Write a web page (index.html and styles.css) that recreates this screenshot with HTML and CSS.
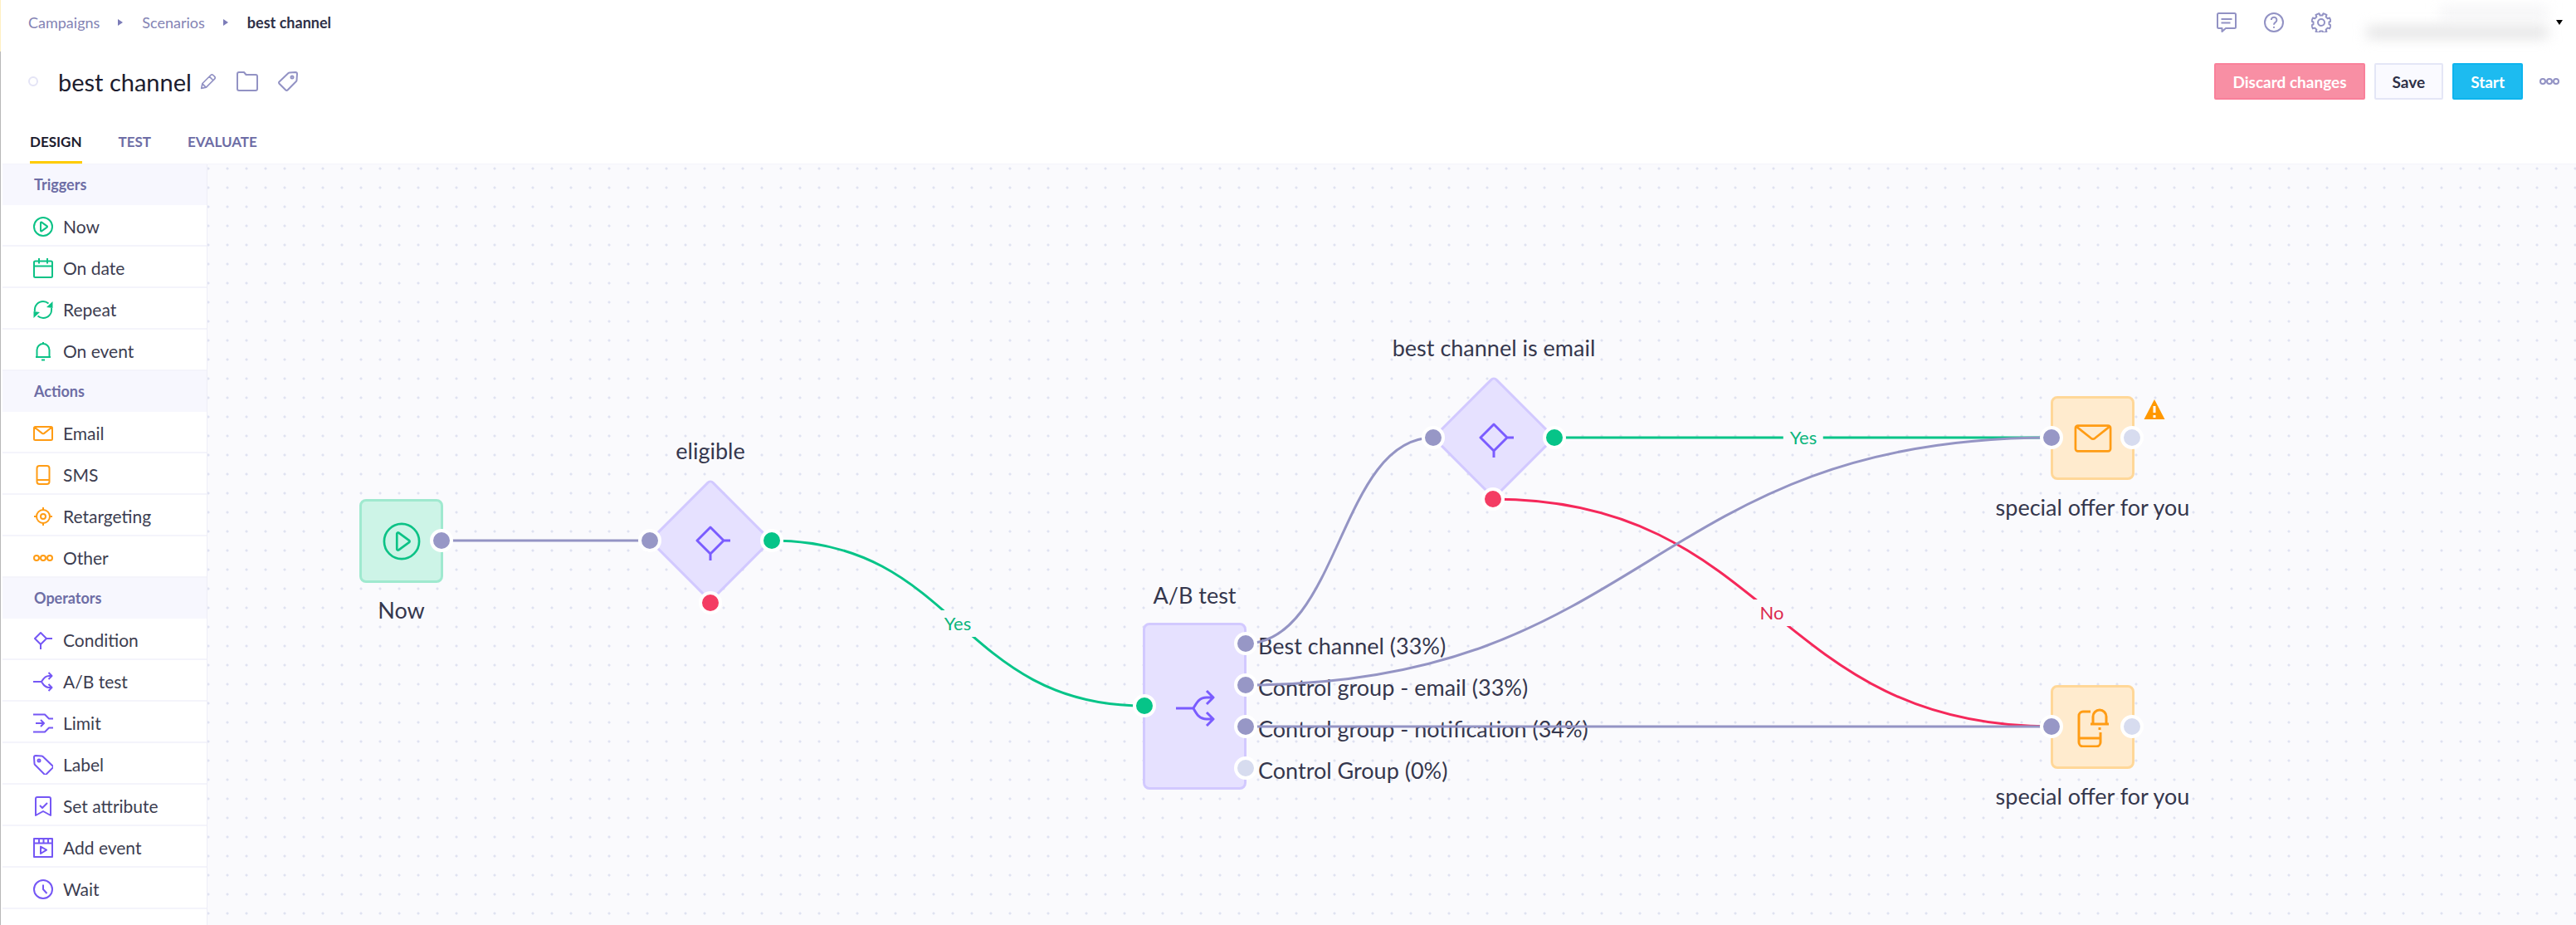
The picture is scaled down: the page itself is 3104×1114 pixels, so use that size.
FILE: index.html
```html
<!DOCTYPE html>
<html lang="en">

<head>
    <meta charset="UTF-8">
    <meta name="viewport" content="width=device-width, initial-scale=1.0">
    <title>best channel - Scenarios</title>
    <link rel="stylesheet" href="styles.css">
</head>

<body>
    <!-- icon set -->
    <svg class="sprite" aria-hidden="true">
        <symbol id="i-chat" viewBox="0 0 24 24">
            <path d="M2.5 1h19A1.5 1.5 0 0 1 23 2.5v15a1.5 1.5 0 0 1-1.5 1.500H11l-4.500 4v-4h-4A1.5 1.5 0 0 1 1 17.5v-15A1.5 1.5 0 0 1 2.5 1zM5.500 8h13M5.500 12.500h11" />
        </symbol>
        <symbol id="i-help" viewBox="0 0 24 24">
            <circle cx="12" cy="12" r="11" />
            <path d="M8.800 9a3.300 3.300 0 1 1 5 2.800c-1.200.8-1.800 1.400-1.800 3M12 17v1.800" />
        </symbol>
        <symbol id="i-gear" viewBox="0 0 24 24">
            <circle cx="12" cy="12" r="4" />
            <path d="M9.500 1.200l1 2.300h3l1-2.300 4 1.700-.9 2.400 2.100 2.100 2.400-.9 1.600 4-2.200 1v2.900l2.200 1.100-1.600 3.900-2.400-.8-2.100 2.100.9 2.300-4 1.700-1-2.200h-3l-1 2.200-4-1.700.9-2.300-2.100-2.100-2.400.8-1.500-3.900 2.100-1.100v-2.900l-2.100-1 1.500-4 2.400.9 2.100-2.100-.9-2.400z" />
        </symbol>
        <symbol id="i-pencil" viewBox="0 0 24 24">
            <path d="M2 22l1.500-7L15.500 3a2.500 2.500 0 0 1 3.500 0l2 2a2.500 2.500 0 0 1 0 3.500L9 20.500zM13.500 5l5.500 5.500M3.500 15.500l5 5" />
        </symbol>
        <symbol id="i-folder" viewBox="0 0 26 24">
            <path d="M1 3a2 2 0 0 1 2-2h6l2.500 3H23a2 2 0 0 1 2 2v15a2 2 0 0 1-2 2H3a2 2 0 0 1-2-2z" />
        </symbol>
        <symbol id="i-tag" viewBox="0 0 24 24">
            <path d="M14 1.500l7-.5a2 2 0 0 1 2 2l-.5 7.500a2 2 0 0 1-.6 1.500L11.500 22.500a1.500 1.500 0 0 1-2.200 0L1.500 14.700a1.500 1.500 0 0 1 0-2.200L12.500 2a2 2 0 0 1 1.500-.5z" />
            <circle cx="17" cy="7" r="1.500" />
        </symbol>
        <symbol id="i-dots" viewBox="0 0 24 24">
            <circle cx="4" cy="12" r="3" />
            <circle cx="12" cy="12" r="3" />
            <circle cx="20" cy="12" r="3" />
        </symbol>
        <symbol id="i-play" viewBox="0 0 24 24">
            <circle cx="12" cy="12" r="11" />
            <path d="M9 7.200v9.600c0 .6.600.9 1.100.6l6.600-4.800c.4-.3.400-.9 0-1.200l-6.600-4.800c-.5-.3-1.100 0-1.100.6z" />
        </symbol>
        <symbol id="i-calendar" viewBox="0 0 24 24">
            <path d="M2.500 3.500h19A1.500 1.500 0 0 1 23 5v16.500a1.500 1.500 0 0 1-1.500 1.500h-19A1.500 1.500 0 0 1 1 21.500V5a1.500 1.500 0 0 1 1.500-1.500zM1 9.500h22M7 0v6.500M17 0v6.500" />
        </symbol>
        <symbol id="i-repeat" viewBox="0 0 24 24">
            <path d="M2 14C1 7 6 2 12 2c2.500 0 4.500.8 6.500 2.500M22 10c1 7-4 12-10 12-2.500 0-4.500-.8-6.500-2.500" />
            <path class="solid" d="M16 9l7.500-7V10zM8 15l-7.500 7V14z" />
        </symbol>
        <symbol id="i-bell" viewBox="0 0 24 24">
            <path d="M3 19h18M4.500 19v-8.500a7.500 7.500 0 0 1 15 0V19M12 3V1M10 22.500h4" />
        </symbol>
        <symbol id="i-mail" viewBox="0 0 24 24">
            <path d="M2.500 4h19A1.500 1.500 0 0 1 23 5.500v13a1.500 1.500 0 0 1-1.500 1.500h-19A1.500 1.500 0 0 1 1 18.500v-13A1.500 1.500 0 0 1 2.500 4zM1.500 4.500l9.300 7.400a2 2 0 0 0 2.400 0l9.300-7.400" />
        </symbol>
        <symbol id="i-phone" viewBox="0 0 24 24">
            <rect x="4.500" y="1" width="15" height="22" rx="3" />
            <path d="M4.500 18h15" />
        </symbol>
        <symbol id="i-target" viewBox="0 0 24 24">
            <circle cx="12" cy="12" r="8" />
            <circle cx="12" cy="12" r="3" />
            <path d="M12 1v4M12 19v4M1 12h4M19 12h4" />
        </symbol>
        <symbol id="i-condition" viewBox="0 0 24 24">
            <path d="M9 3l7 7-7 7-7-7zM16 10h7M9 17v6" />
        </symbol>
        <symbol id="i-split" viewBox="0 0 24 24">
            <path d="M0 12h10M10 12c2-3 3.500-7 9-7h3M10 12c2 3 3.500 7 9 7h3M18.500 1l4 4-4 4M18.500 15l4 4-4 4" />
        </symbol>
        <symbol id="i-limit" viewBox="0 0 24 24">
            <path d="M0 1.500h14l5 5h5M0 22.500h14l5-5h5M3 12h9M9 8l4 4-4 4" />
        </symbol>
        <symbol id="i-label" viewBox="0 0 24 24">
            <path d="M10 1.500L3 1a2 2 0 0 0-2 2l.5 7.500a2 2 0 0 0 .6 1.500l11.400 11.500a1.500 1.500 0 0 0 2.200 0l7.800-7.800a1.500 1.500 0 0 0 0-2.200L11.500 2a2 2 0 0 0-1.500-.5z" />
            <circle cx="7" cy="7" r="1.500" />
        </symbol>
        <symbol id="i-bookmark" viewBox="0 0 24 24">
            <path d="M5 1h14a2 2 0 0 1 2 2v20l-9-5-9 5V3a2 2 0 0 1 2-2zM8 11l3 3 6-6" />
        </symbol>
        <symbol id="i-event" viewBox="0 0 24 24">
            <path d="M1 1h22v22H1zM1 6.500h22M7 1v5M12.500 1v5M18 1v5M9 10.500l7 4.200-7 4.300z" />
        </symbol>
        <symbol id="i-clock" viewBox="0 0 24 24">
            <circle cx="12" cy="12" r="11" />
            <path d="M12 6.500V12l4.500 5" />
        </symbol>
        <symbol id="i-branch" viewBox="0 0 48 48">
            <path d="M24 8l16 16-16 16L8 24zM40 24h11M24 40v11" />
        </symbol>
        <symbol id="i-fork" viewBox="0 0 48 48">
            <path d="M1 26h21M22 26c4-7 7-13 16-13h7M22 26c4 7 7 13 16 13h7M38 5l8 8-8 8M38 31l8 8-8 8" />
        </symbol>
        <symbol id="i-push" viewBox="0 0 40 48">
            <path d="M17 5H8a5 5 0 0 0-5 5v32a5 5 0 0 0 5 5h16a5 5 0 0 0 5-5V30M3 37h26M17 20h22M20 20v-9a8 8 0 0 1 16 0v9M28 24v3" />
        </symbol>
    </svg>

    <header class="header">
        <div class="topbar">
            <nav class="breadcrumbs" aria-label="Breadcrumb">
                <a href="#">Campaigns</a>
                <span class="arrow"></span>
                <a href="#">Scenarios</a>
                <span class="arrow"></span>
                <a href="#" class="current">best channel</a>
            </nav>
            <div class="tools">
                <button type="button" class="icon-button" aria-label="Messages"><svg class="icon"><use href="#i-chat" /></svg></button>
                <button type="button" class="icon-button" aria-label="Help"><svg class="icon"><use href="#i-help" /></svg></button>
                <button type="button" class="icon-button" aria-label="Settings"><svg class="icon"><use href="#i-gear" /></svg></button>
                <button type="button" class="account" aria-label="Account">
                    <span class="account-lines">
                        <span class="line short"></span>
                        <span class="line"></span>
                    </span>
                    <span class="caret"></span>
                </button>
            </div>
        </div>

        <div class="titlebar">
            <span class="status"></span>
            <h1>best channel</h1>
            <button type="button" class="icon-button edit" aria-label="Rename"><svg class="icon"><use href="#i-pencil" /></svg></button>
            <button type="button" class="icon-button folder" aria-label="Folder"><svg class="icon"><use href="#i-folder" /></svg></button>
            <button type="button" class="icon-button" aria-label="Tags"><svg class="icon"><use href="#i-tag" /></svg></button>
            <div class="actions">
                <button type="button" class="btn btn-discard">Discard changes</button>
                <button type="button" class="btn btn-save">Save</button>
                <button type="button" class="btn btn-start">Start</button>
                <button type="button" class="icon-button more" aria-label="More"><svg class="icon"><use href="#i-dots" /></svg></button>
            </div>
        </div>

        <nav class="tabs">
            <a href="#" class="tab active">DESIGN</a>
            <a href="#" class="tab">TEST</a>
            <a href="#" class="tab">EVALUATE</a>
        </nav>
    </header>

    <div class="editor">
        <aside class="sidebar">
            <h2>Triggers</h2>
            <div class="group triggers">
                <button type="button"><svg class="icon"><use href="#i-play" /></svg>Now</button>
                <button type="button"><svg class="icon"><use href="#i-calendar" /></svg>On date</button>
                <button type="button"><svg class="icon"><use href="#i-repeat" /></svg>Repeat</button>
                <button type="button"><svg class="icon"><use href="#i-bell" /></svg>On event</button>
            </div>
            <h2>Actions</h2>
            <div class="group sends">
                <button type="button"><svg class="icon"><use href="#i-mail" /></svg>Email</button>
                <button type="button"><svg class="icon"><use href="#i-phone" /></svg>SMS</button>
                <button type="button"><svg class="icon"><use href="#i-target" /></svg>Retargeting</button>
                <button type="button"><svg class="icon"><use href="#i-dots" /></svg>Other</button>
            </div>
            <h2>Operators</h2>
            <div class="group operators">
                <button type="button"><svg class="icon"><use href="#i-condition" /></svg>Condition</button>
                <button type="button"><svg class="icon"><use href="#i-split" /></svg>A/B test</button>
                <button type="button"><svg class="icon"><use href="#i-limit" /></svg>Limit</button>
                <button type="button"><svg class="icon"><use href="#i-label" /></svg>Label</button>
                <button type="button"><svg class="icon"><use href="#i-bookmark" /></svg>Set attribute</button>
                <button type="button"><svg class="icon"><use href="#i-event" /></svg>Add event</button>
                <button type="button"><svg class="icon"><use href="#i-clock" /></svg>Wait</button>
            </div>
        </aside>

        <main class="canvas">
            <div class="node node-trigger now">
                <svg class="glyph"><use href="#i-play" /></svg>
                <span class="node-label">Now</span>
            </div>
            <div class="node node-condition eligible">
                <svg class="glyph large"><use href="#i-branch" /></svg>
                <span class="node-label above">eligible</span>
            </div>
            <div class="node node-split ab-test">
                <svg class="glyph large"><use href="#i-fork" /></svg>
                <span class="node-label above">A/B test</span>
                <ul class="variants">
                    <li>Best channel (33%)</li>
                    <li>Control group - email (33%)</li>
                    <li>Control group - notification (34%)</li>
                    <li>Control Group (0%)</li>
                </ul>
            </div>
            <div class="node node-condition is-email">
                <svg class="glyph large"><use href="#i-branch" /></svg>
                <span class="node-label above">best channel is email</span>
            </div>
            <div class="node node-action email">
                <svg class="glyph"><use href="#i-mail" /></svg>
                <span class="node-label">special offer for you</span>
                <svg class="warning" viewBox="0 0 26 26">
                    <path d="M13 1L25.500 25H.5z" />
                    <path class="mark" d="M13 9v8M13 20v3" />
                </svg>
            </div>
            <div class="node node-action push">
                <svg class="glyph large"><use href="#i-push" /></svg>
                <span class="node-label">special offer for you</span>
            </div>

            <!-- connections and ports -->
            <svg class="edges">
                <path class="yes" d="M680 453C904 453 904 652 1129 652" />
                <path class="yes" d="M1623 329H2222" />
                <path class="no" d="M1549 403C1885 403 1885 677 2222 677" />
                <path d="M282 453H533" />
                <path d="M1251 577C1364 577 1364 329 1477 329" />
                <path d="M1251 627C1736 627 1736 329 2222 329" />
                <path d="M1251 677H2222" />

                <circle cx="282" cy="453" r="12" />
                <circle cx="533" cy="453" r="12" />
                <circle class="yes" cx="680" cy="453" r="12" />
                <circle class="no" cx="606" cy="528" r="12" />
                <circle class="yes" cx="1129" cy="652" r="12" />
                <circle cx="1251" cy="577" r="12" />
                <circle cx="1251" cy="627" r="12" />
                <circle cx="1251" cy="677" r="12" />
                <circle class="free" cx="1251" cy="727" r="12" />
                <circle cx="1477" cy="329" r="12" />
                <circle class="yes" cx="1623" cy="329" r="12" />
                <circle class="no" cx="1549" cy="403" r="12" />
                <circle cx="2222" cy="329" r="12" />
                <circle class="free" cx="2319" cy="329" r="12" />
                <circle cx="2222" cy="677" r="12" />
                <circle class="free" cx="2319" cy="677" r="12" />
            </svg>
            <span class="edge-label yes eligible-yes">Yes</span>
            <span class="edge-label yes email-yes">Yes</span>
            <span class="edge-label no email-no">No</span>
        </main>
    </div>
</body>

</html>
```

FILE: styles.css
```css
* {
    box-sizing: border-box;
}

body {
    margin: 0;
    padding-left: 3px;
    min-height: 100vh;
    display: flex;
    flex-direction: column;
    font-family: Lato, "Liberation Sans", sans-serif;
    color: #2e3047;
    background: linear-gradient(#fff0c2 62px, #b8b8b8 62px) 0 0 / 1px 100% no-repeat #fff;
}

button {
    font-family: inherit;
    cursor: pointer;
}

.sprite {
    position: absolute;
    width: 0;
    height: 0;
}

.icon {
    display: block;
    width: 24px;
    height: 24px;
    fill: none;
    stroke: currentColor;
    stroke-width: 2;
    stroke-linejoin: round;
    overflow: visible;
}

.solid {
    fill: currentColor;
    stroke: none;
}

.icon-button {
    padding: 0;
    border: 0;
    background: none;
    color: #9292c4;
}

/* Header */
.header {
    height: 198px;
    display: flex;
    flex-direction: column;
    border-bottom: 1px solid #f4f4fb;
}

.topbar {
    height: 53px;
    display: flex;
    align-items: center;
    justify-content: space-between;
    padding: 0 16px 0 31px;
}

.breadcrumbs {
    display: flex;
    align-items: center;
    font-size: 18px;
}

.breadcrumbs a {
    color: #8383b4;
    text-decoration: none;
}

.breadcrumbs .current {
    color: #2e3047;
    font-weight: 700;
}

.arrow {
    margin: 0 23px 0 22px;
    border: 4px solid transparent;
    border-left: 6px solid #7c7cb8;
    border-right: 0;
}

.tools {
    display: flex;
    align-items: center;
    gap: 33px;
}

.account {
    display: flex;
    align-items: center;
    gap: 10px;
    padding: 0;
    border: 0;
    background: none;
}

.account-lines {
    display: flex;
    flex-direction: column;
    align-items: flex-end;
    gap: 12px;
    width: 228px;
}

.line {
    width: 218px;
    height: 12px;
    background: #dededf;
    filter: blur(8px);
}

.line.short {
    width: 130px;
    background: #f2f2f4;
}

.caret {
    border: 4px solid transparent;
    border-top: 6px solid #000;
    border-bottom: 0;
}

.titlebar {
    height: 90px;
    display: flex;
    align-items: center;
    gap: 24px;
    padding: 0 20px 0 31px;
}

.status {
    width: 12px;
    height: 12px;
    border: 2px solid #e4e4f6;
    border-radius: 50%;
}

h1 {
    margin: 0;
    font-size: 29px;
    font-weight: 400;
    color: #1c1c2e;
}

.edit {
    margin-left: -14px;
}

.edit .icon {
    width: 20px;
    height: 20px;
}

.folder .icon {
    width: 26px;
}

.actions {
    display: flex;
    align-items: center;
    gap: 11px;
    margin-left: auto;
}

.btn {
    height: 44px;
    padding: 0 20px;
    border: 2px solid;
    border-radius: 2px;
    font-size: 19px;
    font-weight: 700;
}

.btn-discard {
    color: #fff;
    background: #f88fa4;
    border-color: #f9809a;
}

.btn-save {
    color: #2e3047;
    background: #fafaff;
    border-color: #e4e6f6;
}

.btn-start {
    color: #fff;
    background: #1dbbf0;
    border-color: #0db4ee;
}

.more {
    margin-left: 9px;
}

.tabs {
    flex: 1;
    display: flex;
    gap: 44px;
    padding-left: 33px;
}

.tab {
    display: flex;
    align-items: center;
    padding-top: 4px;
    border-bottom: 3px solid transparent;
    font-size: 17px;
    font-weight: 700;
    color: #6d6da5;
    text-decoration: none;
}

.tab.active {
    color: #1c1c2e;
    border-color: #fc0;
}

/* Sidebar */
.editor {
    flex: 1;
    display: flex;
}

.sidebar {
    width: 247px;
    background: #fff;
    border-right: 1px solid #eeeef7;
}

.sidebar h2 {
    margin: 0;
    padding-left: 38px;
    font-size: 18px;
    font-weight: 700;
    line-height: 49px;
    color: #6d6da5;
    background: #f7f7fe;
}

.group button {
    display: flex;
    align-items: center;
    gap: 12px;
    width: 100%;
    height: 50px;
    padding: 3px 0 0 37px;
    border: 0;
    border-bottom: 2px solid #f4f4fb;
    background: none;
    font-size: 21px;
    color: #3c3d50;
}

.triggers .icon {
    color: #0cc286;
}

.sends .icon {
    color: #ff9c14;
}

.operators .icon {
    color: #7557f5;
}

/* Canvas */
.canvas {
    flex: 1;
    position: relative;
    overflow: hidden;
    background: radial-gradient(circle at 12px 5px, #dfe2f1 1px, transparent 2px) 12px 0 / 23px 23px #fafafd;
}

.node {
    position: absolute;
    display: flex;
    align-items: center;
    justify-content: center;
    width: 101px;
    height: 101px;
    border: 3px solid;
    border-radius: 8px;
}

.glyph {
    position: relative;
    width: 46px;
    height: 46px;
    fill: none;
    stroke: currentColor;
    stroke-width: 1.4;
    stroke-linejoin: round;
    overflow: visible;
}

.glyph.large {
    width: 48px;
    height: 48px;
    stroke-width: 3;
}

.node-trigger {
    color: #0cc286;
    background: #cdf4e7;
    border-color: #9fe9cf;
}

.node-action {
    color: #ff9c14;
    background: #ffebce;
    border-color: #ffd798;
}

.node-split {
    width: 125px;
    height: 201px;
    color: #7a5cff;
    background: #e6e1ff;
    border-color: #d2c9ff;
}

.node-condition {
    width: 106px;
    height: 106px;
    border: 0;
    color: #7a5cff;
}

.node-condition::before {
    content: "";
    position: absolute;
    inset: 0;
    background: #e6e1ff;
    border: 3px solid #d2c9ff;
    border-radius: 6px;
    transform: rotate(45deg);
}

.node-label {
    position: absolute;
    top: calc(100% + 20px);
    left: 50%;
    transform: translateX(-50%);
    font-size: 27px;
    line-height: 32px;
    white-space: nowrap;
    color: #35374d;
}

.node-label.above {
    top: auto;
    bottom: calc(100% + 20px);
}

.node-condition .above {
    bottom: calc(100% + 39px);
}

.now {
    left: 183px;
    top: 403px;
}

.eligible {
    left: 553px;
    top: 400px;
}

.ab-test {
    left: 1127px;
    top: 552px;
}

.is-email {
    left: 1497px;
    top: 276px;
}

.email {
    left: 2221px;
    top: 279px;
}

.push {
    left: 2221px;
    top: 627px;
}

.variants {
    position: absolute;
    left: 136px;
    top: 0;
    margin: 0;
    padding: 0;
    list-style: none;
    font-size: 27px;
    line-height: 50px;
    white-space: nowrap;
    color: #35374d;
}

.warning {
    position: absolute;
    left: 109px;
    top: 0;
    width: 26px;
    height: 26px;
    fill: #ff9800;
}

.warning .mark {
    stroke: #fff;
    stroke-width: 3;
}

.edges {
    position: absolute;
    inset: 0;
    width: 100%;
    height: 100%;
}

.edges path {
    fill: none;
    stroke: #9494c4;
    stroke-width: 3;
}

.edges circle {
    fill: #9797c6;
    stroke: #fff;
    stroke-width: 4;
}

.edges path.yes {
    stroke: #06c488;
}

.edges path.no {
    stroke: #f5285a;
}

.edges circle.yes {
    fill: #06c488;
}

.edges circle.no {
    fill: #f43c63;
}

.edges circle.free {
    fill: #d7dcef;
}

.edge-label {
    position: absolute;
    transform: translate(-50%, -50%);
    padding: 0 8px;
    font-size: 22px;
    line-height: 32px;
    background: #fafafd;
}

.edge-label.yes {
    color: #0cb57c;
}

.edge-label.no {
    color: #dc2850;
}

.eligible-yes {
    left: 904px;
    top: 553px;
}

.email-yes {
    left: 1923px;
    top: 329px;
}

.email-no {
    left: 1885px;
    top: 540px;
}
```
